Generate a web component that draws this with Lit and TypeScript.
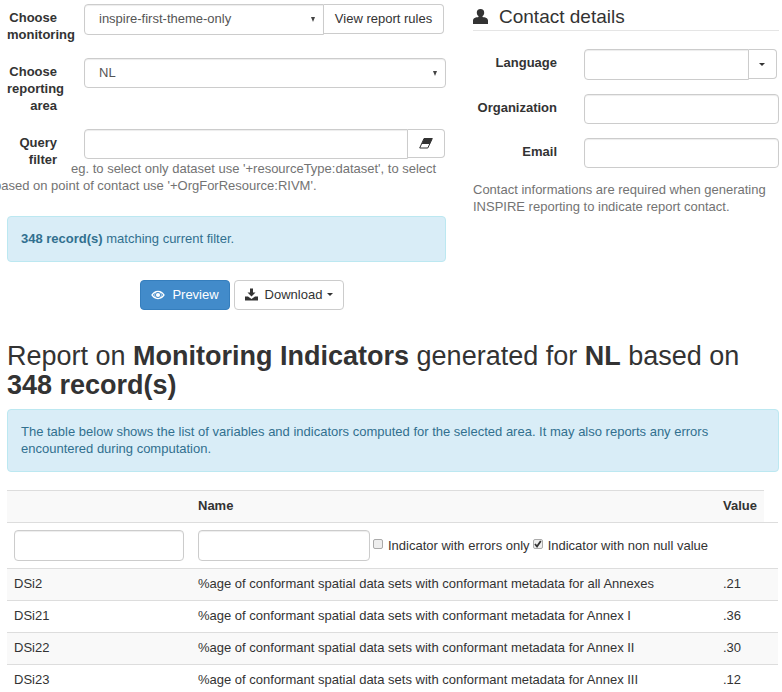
import { LitElement, html, css } from "lit";
import { customElement } from "lit/decorators.js";

const caret = html`<span class="caret"></span>`;
const selArrow = html`<span class="sel-arrow"></span>`;

const eraser = html`<svg class="ico" width="14" height="11" viewBox="0 0 14 11"><path d="M5 .5H13.300L8.800 10H.7Z" fill="#fff" stroke="#333" stroke-width="1"/><path d="M5 .5H13.300L10.800 6H2.600Z" fill="#333"/></svg>`;
const eye = html`<svg class="ico" width="14" height="12" viewBox="0 0 14 12"><path fill-rule="evenodd" fill="#fff" d="M7 1.800C3.900 1.800 1.400 3.900.2 6c1.200 2.100 3.700 4.200 6.800 4.200s5.600-2.100 6.800-4.200C12.600 3.900 10.100 1.800 7 1.800ZM7 3a3 3 0 1 1 0 6 3 3 0 0 1 0-6ZM1.900 6c.6-.8 1.300-1.400 2.100-1.900A3.600 3.600 0 0 0 4 7.900C3.200 7.400 2.500 6.800 1.900 6Zm10.200 0c-.6.8-1.300 1.400-2.100 1.900a3.600 3.600 0 0 0 0-3.800c.8.5 1.500 1.100 2.100 1.900Z"/><circle cx="7" cy="6" r="2.100" fill="#fff"/></svg>`;
const download = html`<svg class="ico" width="13" height="13" viewBox="0 0 13 13"><path fill="#333" d="M5 .5H8V4.500H10.500L6.500 8.500 2.500 4.500H5Z"/><path fill="#333" d="M0 8.500H3L6.500 11 10 8.500H13V12.500H0Z"/></svg>`;
const user = html`<svg width="15" height="15" viewBox="0 0 15 15"><circle cx="7.500" cy="3.800" r="3.700" fill="#333"/><path fill="#333" d="M5.500 6.500h4v1.500c2.500.3 5.500 1 5.500 3.500V15H0v-3.500C0 9 3 8.300 5.500 8Z"/></svg>`;

const rows: [string, string, string][] = [
  ["DSi2", "%age of conformant spatial data sets with conformant metadata for all Annexes", ".21"],
  ["DSi21", "%age of conformant spatial data sets with conformant metadata for Annex I", ".36"],
  ["DSi22", "%age of conformant spatial data sets with conformant metadata for Annex II", ".30"],
  ["DSi23", "%age of conformant spatial data sets with conformant metadata for Annex III", ".12"],
];

@customElement("app-root")
export class AppRoot extends LitElement {
  static styles = css`
    :host {
      display: block;
      width: 782px;
      height: 692px;
      overflow: hidden;
      font-family: "Liberation Sans", Arial, sans-serif;
      font-size: 13px;
      line-height: 17px;
      color: #333;
      box-sizing: border-box;
    }
    * { box-sizing: border-box; }
    .top { display: grid; grid-template-columns: 439px 306px; column-gap: 27px; padding: 0 0 0 7px; height: 339px; }
    .left { min-width: 0; }

    .row1 { display: flex; height: 54px; }
    .r2 { height: 71px; }
    .r3 { height: 35px; }
    .lab { width: 50px; flex: none; text-align: right; font-weight: 700; padding-top: 9px; }
    .ctl { margin-left: 27px; padding-top: 4px; }
    .select {
      display: flex; align-items: center; justify-content: space-between;
      height: 31px; border: 1px solid #ccc; border-radius: 4px; background: #fff;
      padding: 0 8px 2px 14px; color: #555;
      box-shadow: inset 0 1px 1px rgba(0,0,0,.075);
    }
    .sel-arrow { width: 0; height: 0; margin-top: 2px; border-left: 2.5px solid transparent; border-right: 2.5px solid transparent; border-top: 5px solid #444; }
    .s1 { width: 240px; border-radius: 4px 0 0 4px; }
    .s2 { width: 362px; height: 30px; }
    .group { display: flex; align-items: flex-start; }
    .btn {
      display: inline-flex; align-items: center; justify-content: center;
      border: 1px solid #ccc; background: #fff; color: #333; border-radius: 4px;
      font: inherit;
    }
    .rules { width: 120px; height: 30px; border-left: 0; border-radius: 0 4px 4px 0; padding: 0 0 2px; }
    .input {
      display: block; height: 30px; border: 1px solid #ccc; border-radius: 4px; background: #fff;
      box-shadow: inset 0 1px 1px rgba(0,0,0,.075);
    }
    .q { width: 324px; border-radius: 4px 0 0 4px; }
    .erase { width: 37px; height: 29px; border-left: 0; border-radius: 0 4px 4px 0; padding: 0; }
    .help { color: #737373; }
    .qhelp { margin-left: -13px; text-indent: 77px; width: 460px; white-space: nowrap; height: 34px; }
    .alert {
      background: #d9edf7; border: 1px solid #bce8f1; border-radius: 4px; color: #31708f;
      padding: 13px;
    }
    .a1 { height: 46px; margin-top: 22px; }
    .actions { display: flex; gap: 4px; margin: 18px 0 0 133px; }
    .primary { background: #428bca; border-color: #357ebd; color: #fff; width: 90px; height: 30px; gap: 7px; padding: 0 0 1px; }
    .dl { width: 110px; height: 30px; gap: 7px; padding: 0 0 1px; }
    .caret { display: inline-block; width: 0; height: 0; border-left: 3px solid transparent; border-right: 3px solid transparent; border-top: 3.5px solid currentColor; margin-left: -2px; }

    .legend { display: flex; align-items: center; gap: 11px; height: 31px; border-bottom: 1px solid #e5e5e5; font-size: 19px; padding-top: 2px; }
    .rrow { display: flex; align-items: center; }
    .rlab { width: 84px; text-align: right; font-weight: 700; margin-right: 27px; padding-bottom: 3px; }
    .rrow .input { width: 195px; }
    .lang { display: flex; align-items: flex-start; margin-top: 18px; }
    .rrow.lang .input { width: 165px; border-radius: 4px 0 0 4px; height: 31px; }
    .lang .btn { width: 28px; height: 30px; border-left: 0; border-radius: 0 4px 4px 0; padding: 0; }
    .lang .rlab { padding: 5px 0 0; }
    .org { margin-top: 14px; height: 30px; }
    .email { margin-top: 14px; height: 30px; }
    .chelp { margin-top: 13px; }

    h2 { font-size: 27px; line-height: 29px; font-weight: 400; margin: 0; padding: 3px 7px 0; color: #333; }
    h2 b { font-weight: 700; }
    .a2 { margin: 9px 3px 0 7px; height: 63px; }

    .table { margin: 18px 0 0 7px; width: 771px; }
    .tr { display: grid; grid-template-columns: 184px 525px 1fr; border-top: 1px solid #ddd; height: 32px; padding: 5px 0 7px; }
    .tr > div { padding: 0 7px; line-height: 19px; white-space: nowrap; }
    .head { width: 757px; background: #f9f9f9; font-weight: 700; }
    .filters { height: 46px; padding: 7px 0; align-items: start; }
    .filters .input { height: 31px; }
    .f1 { width: 170px; }
    .f2 { width: 172px; }
    .tr > .fcell { display: flex; align-items: center; gap: 3px; height: 31px; }
    .tr > .wide { grid-column: 2 / 4; }
    .check { display: flex; align-items: center; gap: 5px; }
    .box { width: 10px; height: 10px; border: 1px solid #aaa; border-radius: 2px; background: #eee; flex: none; position: relative; margin-top: -3px; }
    .box svg { position: absolute; left: 0; top: 0; }
    .stripe { background: #f9f9f9; }
  `;

  render() {
    return html`
      <div class="top">
        <div class="left">
          <div class="row1">
            <div class="lab">Choose monitoring</div>
            <div class="ctl group">
              <div class="select s1">inspire-first-theme-only ${selArrow}</div>
              <button class="btn rules">View report rules</button>
            </div>
          </div>
          <div class="row1 r2">
            <div class="lab">Choose reporting area</div>
            <div class="ctl"><div class="select s2">NL ${selArrow}</div></div>
          </div>
          <div class="row1 r3">
            <div class="lab">Query filter</div>
            <div class="ctl">
              <div class="group">
                <div class="input q"></div>
                <button class="btn erase">${eraser}</button>
              </div>
            </div>
          </div>
          <div class="help qhelp">eg. to select only dataset use '+resourceType:dataset', to select<br />based on point of contact use '+OrgForResource:RIVM'.</div>
          <div class="alert a1"><b>348 record(s)</b> matching current filter.</div>
          <div class="actions">
            <button class="btn primary">${eye} Preview</button>
            <button class="btn dl">${download} Download ${caret}</button>
          </div>
        </div>
        <div class="right">
          <div class="legend">${user}<span>Contact details</span></div>
          <div class="rrow lang">
            <div class="rlab">Language</div>
            <div class="input"></div>
            <button class="btn">${caret}</button>
          </div>
          <div class="rrow org"><div class="rlab">Organization</div><div class="input"></div></div>
          <div class="rrow email"><div class="rlab">Email</div><div class="input"></div></div>
          <div class="help chelp">Contact informations are required when generating INSPIRE reporting to indicate report contact.</div>
        </div>
      </div>
      <h2>Report on <b>Monitoring Indicators</b> generated for <b>NL</b> based on <b>348 record(s)</b></h2>
      <div class="alert a2">The table below shows the list of variables and indicators computed for the selected area. It may also reports any errors encountered during computation.</div>
      <div class="table">
        <div class="tr head"><div></div><div>Name</div><div>Value</div></div>
        <div class="tr filters">
          <div><div class="input f1"></div></div>
          <div class="fcell wide">
            <div class="input f2"></div>
            <span class="check"><span class="box"></span>Indicator with errors only</span>
            <span class="check"><span class="box"><svg width="8" height="8" viewBox="0 0 8 8"><path d="M1 4 3 6.500 6.800 1" fill="none" stroke="#333" stroke-width="1.800"/></svg></span>Indicator with non null value</span>
          </div>
        </div>
        ${rows.map((r, i) => html`<div class="tr ${i % 2 === 0 ? "stripe" : ""}"><div>${r[0]}</div><div>${r[1]}</div><div>${r[2]}</div></div>`)}
      </div>
    `;
  }
}
